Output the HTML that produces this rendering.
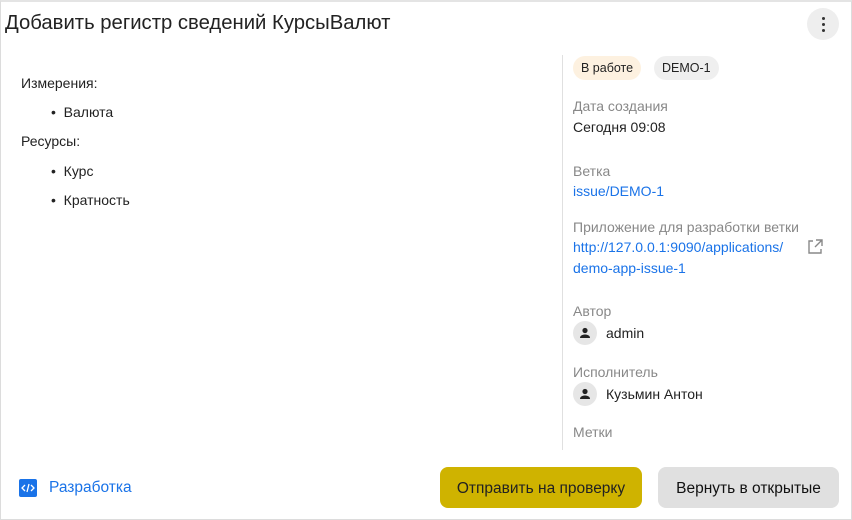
<!DOCTYPE html>
<html><head><meta charset="utf-8"><style>
*{margin:0;padding:0;box-sizing:border-box}
body{width:852px;height:520px;background:#fff;font-family:"Liberation Sans",sans-serif;color:#222;position:relative;overflow:hidden}
.frame{position:absolute;left:0;top:0;width:852px;height:520px;border:1px solid #dcdcdc;border-top:2px solid #e4e4e4}
.a{position:absolute;white-space:nowrap}
.t{font-size:20.3px;left:5px;top:12px;color:#222}
.menu{left:807px;top:8px;width:32px;height:32px;border-radius:50%;background:#eee}
.menu i{position:absolute;left:15px;width:3px;height:3px;border-radius:50%;background:#333}
.s{font-size:14px}
.g{color:#888}
.b{color:#1a73e8}
.div{left:562px;top:55px;width:1px;height:395px;background:#e0e0e0}
.chip{top:56px;height:24px;border-radius:12px;font-size:12.5px;line-height:24px;padding:0 8px}
.av{width:24px;height:24px;border-radius:50%;background:#e6e6e6}
.btn{top:467px;height:41px;border-radius:8px;font-size:15.5px;line-height:43px;text-align:center}
</style></head><body>
<div class="frame"></div>
<div class="a t">Добавить регистр сведений КурсыВалют</div>
<div class="a menu"><i style="top:9px"></i><i style="top:15px"></i><i style="top:21px"></i></div>

<div class="a s" style="left:21px;top:75px">Измерения:</div>
<div class="a s" style="left:51px;top:104px">•&nbsp;&nbsp;Валюта</div>
<div class="a s" style="left:21px;top:133px">Ресурсы:</div>
<div class="a s" style="left:51px;top:163px">•&nbsp;&nbsp;Курс</div>
<div class="a s" style="left:51px;top:192px">•&nbsp;&nbsp;Кратность</div>

<div class="a div"></div>
<div class="a chip" style="left:573px;background:#fdf1e0">В работе</div>
<div class="a chip" style="left:654px;background:#efefef">DEMO-1</div>

<div class="a s g" style="left:573px;top:98px">Дата создания</div>
<div class="a s" style="left:573px;top:119px">Сегодня 09:08</div>
<div class="a s g" style="left:573px;top:163px">Ветка</div>
<div class="a s b" style="left:573px;top:183px">issue/DEMO-1</div>
<div class="a s g" style="left:573px;top:219px">Приложение для разработки ветки</div>
<div class="a s b" style="left:573px;top:239px">http://127.0.0.1:9090/applications/</div>
<div class="a s b" style="left:573px;top:260px">demo-app-issue-1</div>
<svg class="a" style="left:806px;top:238px" width="18" height="18" viewBox="0 0 18 18" fill="none" stroke="#888" stroke-width="1.4"><path d="M7 3H3v12h12v-4"/><path d="M10 2h6v6M16 2l-7 7"/></svg>

<div class="a s g" style="left:573px;top:303px">Автор</div>
<div class="a av" style="left:573px;top:321px"></div>
<svg class="a" style="left:578px;top:326px" width="14" height="14" viewBox="0 0 14 14" fill="#222"><circle cx="7" cy="4.5" r="2.6"/><path d="M2 12c0-2.5 2.5-3.5 5-3.5s5 1 5 3.5z"/></svg>
<div class="a s" style="left:606px;top:325px">admin</div>
<div class="a s g" style="left:573px;top:364px">Исполнитель</div>
<div class="a av" style="left:573px;top:382px"></div>
<svg class="a" style="left:578px;top:387px" width="14" height="14" viewBox="0 0 14 14" fill="#222"><circle cx="7" cy="4.5" r="2.6"/><path d="M2 12c0-2.5 2.5-3.5 5-3.5s5 1 5 3.5z"/></svg>
<div class="a s" style="left:606px;top:386px">Кузьмин Антон</div>
<div class="a s g" style="left:573px;top:424px">Метки</div>

<svg class="a" style="left:19px;top:479px" width="18" height="18" viewBox="0 0 18 18"><rect width="18" height="18" rx="2" fill="#1a73e8"/><path d="M6 6l-3 3 3 3M12 6l3 3-3 3M10 5l-2 8" stroke="#fff" stroke-width="1.3" fill="none"/></svg>
<div class="a" style="left:49px;top:479px;font-size:15.5px;color:#1a73e8">Разработка</div>

<div class="a btn" style="left:440px;width:202px;background:#cfb300;color:#222">Отправить на проверку</div>
<div class="a btn" style="left:658px;width:181px;background:#e0e0e0;color:#111">Вернуть в открытые</div>
</body></html>
